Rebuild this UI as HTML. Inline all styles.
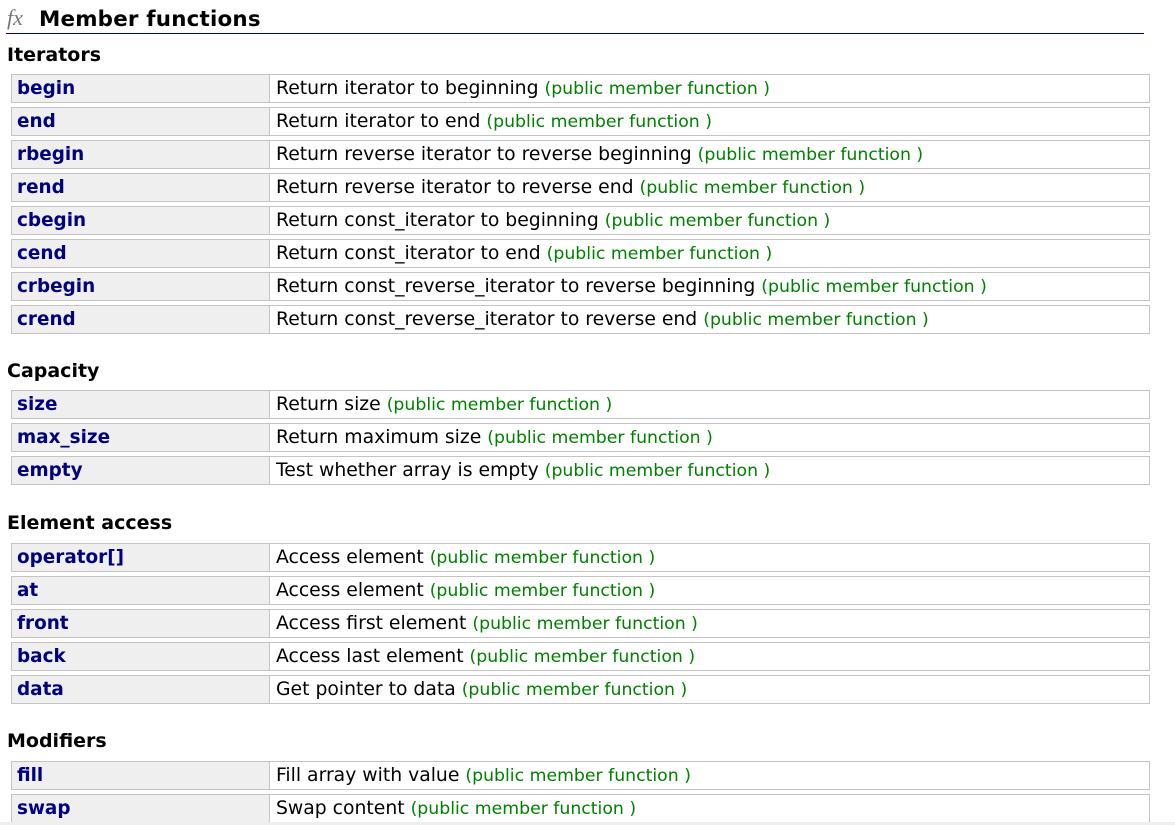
<!DOCTYPE html>
<html><head><meta charset="utf-8"><style>
body{margin:0;background:#fff;font-family:"DejaVu Sans","Liberation Sans",sans-serif;width:1175px;height:825px;overflow:hidden;position:relative}
.t{position:absolute;left:39px;top:7px;font-size:21.4px;font-weight:bold;color:#000;letter-spacing:0.2px}
.fx{position:absolute;left:7px;top:5px;font-family:"Liberation Serif",serif;font-style:italic;font-size:22px;color:#777}
.line{position:absolute;left:6px;top:33px;width:1138px;height:1px;background:#000080}
.h{position:absolute;left:7px;font-size:19px;font-weight:bold;color:#000}
.r{position:absolute;left:11px;width:1137px;height:27px;border:1px solid #c4c4c4;box-sizing:content-box}
.r .a{position:absolute;left:0;top:0;width:258px;height:27px;background:#efefef;border-right:1px solid #c4c4c4;font-weight:bold;color:#000080;font-size:18.4px;line-height:27px;padding-left:5px;box-sizing:border-box}
.r .b{position:absolute;left:264px;top:0;height:27px;line-height:27px;font-size:18.8px;color:#000;white-space:nowrap}
.g{color:#008000;font-size:17.3px}
.bot{position:absolute;left:0;top:822px;width:1175px;height:3px;background:#eee}
</style></head><body>
<div class="fx">fx</div><div class="t">Member functions</div><div class="line"></div>
<div class="h" style="top:44px">Iterators</div>
<div class="r" style="top:74px"><div class="a">begin</div><div class="b">Return iterator to beginning <span class="g">(public member function )</span></div></div>
<div class="r" style="top:107px"><div class="a">end</div><div class="b">Return iterator to end <span class="g">(public member function )</span></div></div>
<div class="r" style="top:140px"><div class="a">rbegin</div><div class="b">Return reverse iterator to reverse beginning <span class="g">(public member function )</span></div></div>
<div class="r" style="top:173px"><div class="a">rend</div><div class="b">Return reverse iterator to reverse end <span class="g">(public member function )</span></div></div>
<div class="r" style="top:206px"><div class="a">cbegin</div><div class="b">Return const_iterator to beginning <span class="g">(public member function )</span></div></div>
<div class="r" style="top:239px"><div class="a">cend</div><div class="b">Return const_iterator to end <span class="g">(public member function )</span></div></div>
<div class="r" style="top:272px"><div class="a">crbegin</div><div class="b">Return const_reverse_iterator to reverse beginning <span class="g">(public member function )</span></div></div>
<div class="r" style="top:305px"><div class="a">crend</div><div class="b">Return const_reverse_iterator to reverse end <span class="g">(public member function )</span></div></div>
<div class="h" style="top:360px">Capacity</div>
<div class="r" style="top:390px"><div class="a">size</div><div class="b">Return size <span class="g">(public member function )</span></div></div>
<div class="r" style="top:423px"><div class="a">max_size</div><div class="b">Return maximum size <span class="g">(public member function )</span></div></div>
<div class="r" style="top:456px"><div class="a">empty</div><div class="b">Test whether array is empty <span class="g">(public member function )</span></div></div>
<div class="h" style="top:512px">Element access</div>
<div class="r" style="top:543px"><div class="a">operator[]</div><div class="b">Access element <span class="g">(public member function )</span></div></div>
<div class="r" style="top:576px"><div class="a">at</div><div class="b">Access element <span class="g">(public member function )</span></div></div>
<div class="r" style="top:609px"><div class="a">front</div><div class="b">Access first element <span class="g">(public member function )</span></div></div>
<div class="r" style="top:642px"><div class="a">back</div><div class="b">Access last element <span class="g">(public member function )</span></div></div>
<div class="r" style="top:675px"><div class="a">data</div><div class="b">Get pointer to data <span class="g">(public member function )</span></div></div>
<div class="h" style="top:730px">Modifiers</div>
<div class="r" style="top:761px"><div class="a">fill</div><div class="b">Fill array with value <span class="g">(public member function )</span></div></div>
<div class="r" style="top:794px"><div class="a">swap</div><div class="b">Swap content <span class="g">(public member function )</span></div></div>
<div class="bot"></div>
</body></html>
